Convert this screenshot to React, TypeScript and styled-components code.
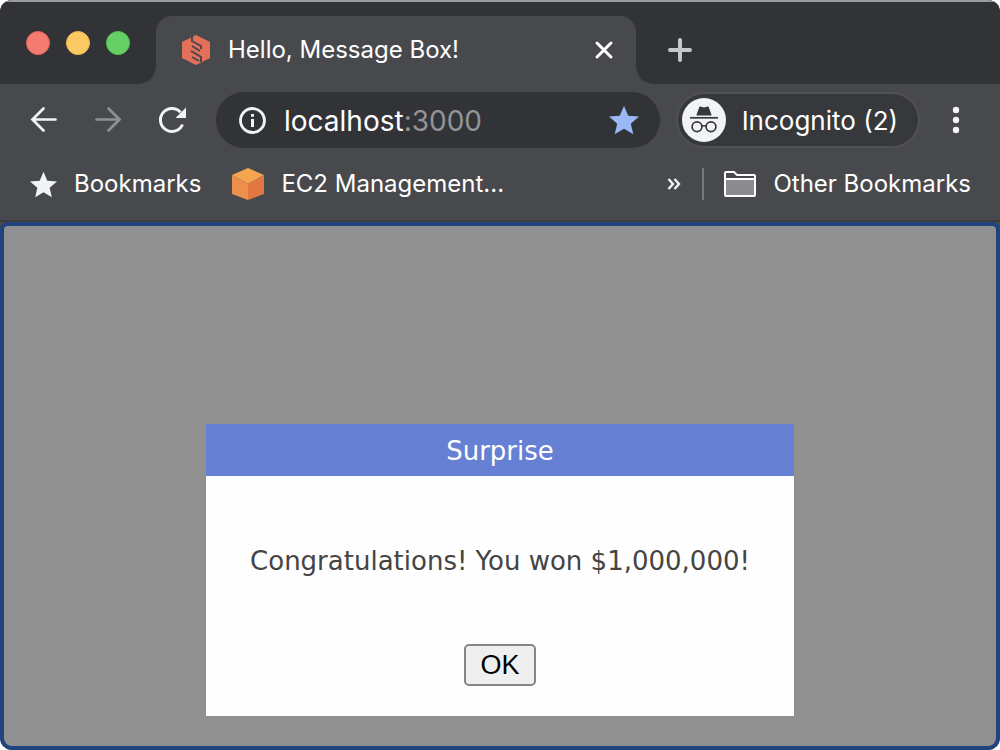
import React from 'react';
import styled, { createGlobalStyle } from 'styled-components';

const GlobalStyle = createGlobalStyle`
  *, *::before, *::after { box-sizing: border-box; }
  body { margin: 0; background: #ffffff; }
`;

const Browser = styled.div`
  display: flex;
  flex-direction: column;
  min-height: 100vh;
  overflow: hidden;
  border-radius: 12px;
  background: #48494c;
  color: #ffffff;
  font-family: Inter, 'Liberation Sans', sans-serif;
  font-size: 24px;
  line-height: 32px;
`;

const TitleBar = styled.header`
  display: flex;
  align-items: flex-end;
  height: 84px;
  border-top: 2px solid #9b9d9c;
  background: #323336;
`;

const WindowControls = styled.div`
  display: flex;
  align-self: center;
  gap: 16px;
  width: 156px;
  padding: 4px 0 4px 26px;
`;

const WindowControl = styled.button<{ $fill: string; $edge: string }>`
  width: 24px;
  height: 24px;
  padding: 0;
  border: 1px solid ${(p) => p.$edge};
  border-radius: 50%;
  background: ${(p) => p.$fill};
`;

const Tab = styled.div`
  position: relative;
  display: flex;
  align-items: center;
  flex: 0 1 480px;
  min-width: 0;
  height: 68px;
  padding: 0 20px 0 26px;
  border-radius: 16px 16px 0 0;
  background: #48494c;

  &::before,
  &::after {
    content: '';
    position: absolute;
    bottom: 0;
    width: 16px;
    height: 16px;
  }
  &::before {
    left: -16px;
    background: radial-gradient(circle at 0 0, #323336 15px, #48494c 16px);
  }
  &::after {
    right: -16px;
    background: radial-gradient(circle at 100% 0, #323336 15px, #48494c 16px);
  }
`;

const TabTitle = styled.span`
  flex: 1;
  min-width: 0;
  margin-left: 18px;
  overflow: hidden;
  white-space: nowrap;
  font-size: 24px;
`;

const IconButton = styled.button<{ $size: number }>`
  display: flex;
  align-items: center;
  justify-content: center;
  flex: none;
  width: ${(p) => p.$size}px;
  height: ${(p) => p.$size}px;
  padding: 0;
  border: 0;
  background: none;
  color: #f1f3f5;
`;

const NewTab = styled(IconButton)`
  align-self: center;
  margin: 14px 0 0 28px;
  color: #c6c7cb;
`;

const Toolbar = styled.nav`
  display: flex;
  align-items: center;
  height: 72px;
  padding: 0 28px;
`;

const NavButtons = styled.div`
  display: flex;
  gap: 32px;
`;

const AddressBar = styled.div`
  display: flex;
  align-items: center;
  flex: 1;
  min-width: 0;
  height: 56px;
  margin-left: 28px;
  padding: 0 20px 0 22px;
  border-radius: 28px;
  background: #323336;
`;

const Address = styled.div`
  flex: 1;
  margin-left: 18px;
  padding-top: 2px;
  font-size: 28px;
  color: #939498;
`;

const Host = styled.span`
  color: #ffffff;
`;

const Profile = styled.button`
  display: flex;
  align-items: center;
  gap: 16px;
  height: 56px;
  margin: 0 20px 0 16px;
  padding: 0 20px 0 4px;
  border: 2px solid #505154;
  border-radius: 28px;
  background: #37383b;
  color: #ffffff;
  font: inherit;
  font-size: 26px;
  white-space: nowrap;
`;

const ProfileName = styled.span`
  padding-top: 2px;
`;

const BookmarksBar = styled.nav`
  display: flex;
  align-items: center;
  height: 66px;
  padding: 0 29px 8px 30px;
  border-bottom: 2px solid #3c3d3f;
`;

const Bookmark = styled.a`
  display: flex;
  align-items: center;
  gap: 17px;
  color: #ffffff;
  text-decoration: none;
  white-space: nowrap;

  & + & { margin-left: 31px; }
`;

const Overflow = styled(IconButton)`
  margin-left: auto;
`;

const Divider = styled.span`
  width: 2px;
  height: 32px;
  margin: 0 20px 0 16px;
  background: #77787b;
`;

const Viewport = styled.main`
  display: flex;
  flex: 1;
  justify-content: center;
  align-items: flex-start;
  padding: 198px 20px 30px;
  border: 4px solid #1f4480;
  border-radius: 8px 8px 12px 12px;
  background: #909090;
`;

const Dialog = styled.section`
  width: 588px;
  max-width: 100%;
  background: #fefefe;
  color: #444444;
  font-family: 'DejaVu Sans', sans-serif;
  font-size: 26px;
  text-align: center;
`;

const DialogTitle = styled.h1`
  margin: 0;
  padding: 11px 10px 9px;
  background: #6681d3;
  color: #ffffff;
  font-size: 26px;
  font-weight: 400;
  line-height: 32px;
`;

const DialogMessage = styled.p`
  margin: 0;
  padding: 69px 20px 67px;
`;

const DialogActions = styled.div`
  display: flex;
  justify-content: center;
  padding-bottom: 30px;
`;

const OkButton = styled.button`
  width: 72px;
  height: 42px;
  padding: 0;
  border: 2px solid #858585;
  border-radius: 5px;
  background: #efefef;
  color: #000000;
  font-family: 'Liberation Sans', sans-serif;
  font-size: 27px;
`;

const Favicon = () => (
  <svg width="28" height="32" viewBox="0 0 28 32" aria-hidden="true">
    <path d="M14 1 28 8V24L14 31 0 24V8Z" fill="#e5705a" />
    <path d="M10 2V7L19 12V15M10 12 18 17M9 17 19 23V28M10 23 17 27" fill="none" stroke="#48494c" strokeWidth="2" />
  </svg>
);

const Star = ({ size, color }: { size: number; color: string }) => (
  <svg width={size} height={size} viewBox="2 2 20 19" aria-hidden="true">
    <path fill={color} d="M12 17.27 18.18 21l-1.64-7.03L22 9.24l-7.19-.61L12 2 9.19 8.63 2 9.24l5.46 4.73L5.82 21z" />
  </svg>
);

const Arrow = ({ forward }: { forward?: boolean }) => (
  <svg width="32" height="32" viewBox="0 0 32 32" fill="none" stroke={forward ? '#8f9094' : '#f1f3f5'} strokeWidth="2.700" strokeLinecap="round" aria-hidden="true">
    <path d={forward ? 'M4.500 15.500H27M16.500 4.500 27.500 15.500 16.500 26.500' : 'M27.500 15.500H5M15.500 4.500 4.500 15.500 15.500 26.500'} />
  </svg>
);

const Reload = () => (
  <svg width="32" height="32" viewBox="0 0 32 32" aria-hidden="true">
    <path d="M26.500 20.500A11.500 11.500 0 1 1 24.500 8.300" fill="none" stroke="#f1f3f5" strokeWidth="3" />
    <path d="M30 3.500V14H19.500Z" fill="#f1f3f5" />
  </svg>
);

const Info = () => (
  <svg width="28" height="28" viewBox="0 0 28 28" aria-hidden="true">
    <circle cx="14.500" cy="14.500" r="12" fill="none" stroke="#f1f3f5" strokeWidth="2.800" />
    <path d="M13 8h3v2.800h-3zM13 13h3v8h-3z" fill="#f1f3f5" />
  </svg>
);

const Incognito = () => (
  <svg width="44" height="44" viewBox="0 0 44 44" aria-hidden="true">
    <circle cx="22" cy="22" r="22" fill="#f1f3f4" />
    <path d="M14.300 17.500 17.300 9Q17.600 8.300 18.500 8.600L22 9.400 25.500 8.600Q26.400 8.300 26.700 9L29.700 17.500Z" fill="#37383b" />
    <path d="M8 19.800H36" stroke="#37383b" strokeWidth="1.700" />
    <g fill="none" stroke="#37383b" strokeWidth="1.700">
      <circle cx="15" cy="28.700" r="4.900" />
      <circle cx="29" cy="28.700" r="4.900" />
      <path d="M19.800 28.500Q22 27 24.200 28.500" />
    </g>
  </svg>
);

const Cube = () => (
  <svg width="32" height="32" viewBox="0 0 32 32" aria-hidden="true">
    <path d="M16 0 32 7 16 16 0 7Z" fill="#f4a550" />
    <path d="M0 7 16 16V32L0 26Z" fill="#ec8f4a" />
    <path d="M32 7 16 16V32L32 26Z" fill="#e27742" />
  </svg>
);

const Folder = () => (
  <svg width="32" height="26" viewBox="0 0 32 26" aria-hidden="true">
    <path d="M1 7H31V24H1Z" fill="#8c8c8e" />
    <path d="M1 8V1.500H9.500L12.500 4.500H31V8" fill="#48494c" />
    <path d="M1 8H31M1 2Q1 1 2 1H10L13 4H30Q31 4 31 5V24Q31 25 30 25H2Q1 25 1 24Z" fill="none" stroke="#ffffff" strokeWidth="2" />
  </svg>
);

export default function App() {
  return (
    <Browser>
      <GlobalStyle />
      <TitleBar>
        <WindowControls>
          <WindowControl aria-label="Close window" $fill="#f47b72" $edge="#e8645b" />
          <WindowControl aria-label="Minimize window" $fill="#fac961" $edge="#f0bb50" />
          <WindowControl aria-label="Zoom window" $fill="#66d066" $edge="#55c455" />
        </WindowControls>
        <Tab>
          <Favicon />
          <TabTitle>Hello, Message Box!</TabTitle>
          <IconButton aria-label="Close tab" $size={24}>
            <svg width="24" height="24" viewBox="0 0 24 24" fill="none" stroke="#ffffff" strokeWidth="3" strokeLinecap="round">
              <path d="M5 5 19 19M19 5 5 19" />
            </svg>
          </IconButton>
        </Tab>
        <NewTab aria-label="New tab" $size={32}>
          <svg width="32" height="32" viewBox="0 0 32 32" fill="none" stroke="currentColor" strokeWidth="4" strokeLinecap="round">
            <path d="M16 6V26M6 16H26" />
          </svg>
        </NewTab>
      </TitleBar>
      <Toolbar>
        <NavButtons>
          <IconButton aria-label="Back" $size={32}><Arrow /></IconButton>
          <IconButton aria-label="Forward" $size={32}><Arrow forward /></IconButton>
          <IconButton aria-label="Reload" $size={32}><Reload /></IconButton>
        </NavButtons>
        <AddressBar>
          <Info />
          <Address><Host>localhost</Host>:3000</Address>
          <IconButton aria-label="Edit bookmark" $size={32}><Star size={30} color="#99b8f4" /></IconButton>
        </AddressBar>
        <Profile><Incognito /><ProfileName>Incognito (2)</ProfileName></Profile>
        <IconButton aria-label="Menu" $size={32}>
          <svg width="8" height="28" viewBox="0 0 8 28" fill="currentColor">
            <circle cx="4" cy="4" r="3.200" />
            <circle cx="4" cy="14" r="3.200" />
            <circle cx="4" cy="24" r="3.200" />
          </svg>
        </IconButton>
      </Toolbar>
      <BookmarksBar>
        <Bookmark href="#bookmarks"><Star size={27} color="#f1f3f5" />Bookmarks</Bookmark>
        <Bookmark href="#ec2"><Cube />EC2 Management...</Bookmark>
        <Overflow aria-label="More bookmarks" $size={24}>
          <svg width="14" height="14" viewBox="0 0 14 14" fill="none" stroke="currentColor" strokeWidth="2.400">
            <path d="M1.500 2 6 7 1.500 12M7.500 2 12 7 7.500 12" />
          </svg>
        </Overflow>
        <Divider />
        <Bookmark href="#other"><Folder />Other Bookmarks</Bookmark>
      </BookmarksBar>
      <Viewport>
        <Dialog role="dialog" aria-labelledby="dialog-title">
          <DialogTitle id="dialog-title">Surprise</DialogTitle>
          <DialogMessage>Congratulations! You won $1,000,000!</DialogMessage>
          <DialogActions><OkButton>OK</OkButton></DialogActions>
        </Dialog>
      </Viewport>
    </Browser>
  );
}
